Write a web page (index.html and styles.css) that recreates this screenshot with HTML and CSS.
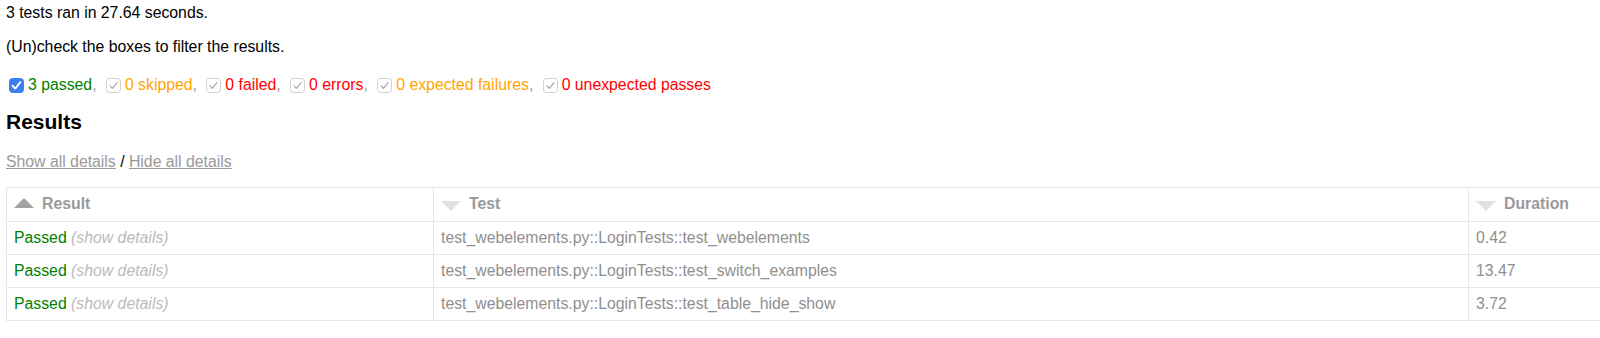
FILE: index.html
```html
<!DOCTYPE html>
<html>
<head>
<meta charset="utf-8">
<title>Test Report</title>
<link rel="stylesheet" href="styles.css">
</head>
<body>
<p class="summary-line">3 tests ran in 27.64 seconds.</p>
<p class="summary-line hint">(Un)check the boxes to filter the results.</p>
<div class="filters">
  <span class="cb checked first"><svg viewBox="0 0 15 15" width="15" height="15"><path d="M3.6 7.8 L6.3 10.6 L11.4 4.2" fill="none" stroke="#fff" stroke-width="1.9" stroke-linecap="round" stroke-linejoin="round"/></svg></span><span class="passed">3 passed</span><span class="sep">, </span>
  <span class="cb"><svg viewBox="0 0 15 15" width="15" height="15"><path d="M4 7.8 L6.4 10.3 L11 4.6" fill="none" stroke="#a8a8a8" stroke-width="1.2" stroke-linecap="round" stroke-linejoin="round"/></svg></span><span class="skipped">0 skipped</span><span class="sep">, </span>
  <span class="cb"><svg viewBox="0 0 15 15" width="15" height="15"><path d="M4 7.8 L6.4 10.3 L11 4.6" fill="none" stroke="#a8a8a8" stroke-width="1.2" stroke-linecap="round" stroke-linejoin="round"/></svg></span><span class="failed">0 failed</span><span class="sep">, </span>
  <span class="cb"><svg viewBox="0 0 15 15" width="15" height="15"><path d="M4 7.8 L6.4 10.3 L11 4.6" fill="none" stroke="#a8a8a8" stroke-width="1.2" stroke-linecap="round" stroke-linejoin="round"/></svg></span><span class="failed">0 errors</span><span class="sep">, </span>
  <span class="cb"><svg viewBox="0 0 15 15" width="15" height="15"><path d="M4 7.8 L6.4 10.3 L11 4.6" fill="none" stroke="#a8a8a8" stroke-width="1.2" stroke-linecap="round" stroke-linejoin="round"/></svg></span><span class="skipped">0 expected failures</span><span class="sep">, </span>
  <span class="cb"><svg viewBox="0 0 15 15" width="15" height="15"><path d="M4 7.8 L6.4 10.3 L11 4.6" fill="none" stroke="#a8a8a8" stroke-width="1.2" stroke-linecap="round" stroke-linejoin="round"/></svg></span><span class="failed">0 unexpected passes</span>
</div>
<h2 class="results-title">Results</h2>
<p class="details-links"><a href="#">Show all details</a> / <a href="#">Hide all details</a></p>
<table class="results-table">
  <colgroup>
    <col class="c-result">
    <col class="c-test">
    <col class="c-duration">
  </colgroup>
  <thead>
    <tr>
      <th><span class="sort-icon asc"></span>Result</th>
      <th><span class="sort-icon inactive"></span>Test</th>
      <th><span class="sort-icon inactive"></span>Duration</th>
    </tr>
  </thead>
  <tbody>
    <tr>
      <td><span class="passed">Passed</span> <span class="expander">(show details)</span></td>
      <td>test_webelements.py::LoginTests::test_webelements</td>
      <td>0.42</td>
    </tr>
    <tr>
      <td><span class="passed">Passed</span> <span class="expander">(show details)</span></td>
      <td>test_webelements.py::LoginTests::test_switch_examples</td>
      <td>13.47</td>
    </tr>
    <tr>
      <td><span class="passed">Passed</span> <span class="expander">(show details)</span></td>
      <td>test_webelements.py::LoginTests::test_table_hide_show</td>
      <td>3.72</td>
    </tr>
  </tbody>
</table>
</body>
</html>
```
FILE: styles.css
```css
html {
  overflow: hidden;
  background: #fff;
}
body {
  margin: 0;
  padding: 0 0 0 6px;
  font-family: "Liberation Sans", Arial, Helvetica, sans-serif;
  font-size: 15.8px;
  line-height: 18px;
  color: #999;
}
.summary-line {
  margin: 4px 0 0 0;
  color: #000;
}
.hint {
  margin-top: 16px;
}
.filters {
  margin-top: 20px;
  height: 18px;
  display: flex;
  align-items: center;
  white-space: pre;
}
.cb {
  display: inline-block;
  width: 15px;
  height: 15px;
  box-sizing: border-box;
  border: 1px solid #cfcfcf;
  border-radius: 3.5px;
  background: #fff;
  margin: 0 4px 0 5px;
}
.cb.first {
  margin-left: 3px;
}
.cb svg {
  display: block;
  margin: -1px;
}
.cb.checked {
  background: #3b7ff5;
  border-color: #3b7ff5;
}
.sep {
  color: #999;
}
.passed {
  color: #008000;
}
.skipped {
  color: #ffa500;
}
.failed {
  color: #ff0000;
}
.results-title {
  margin: 16px 0 0 0;
  font-size: 21px;
  line-height: 24px;
  font-weight: bold;
  color: #000;
}
.details-links {
  margin: 19px 0 0 0;
  color: #000;
}
.details-links a {
  color: #999;
  text-decoration: underline;
}
.results-table {
  margin-top: 16px;
  border-collapse: collapse;
  table-layout: fixed;
  width: 1800px;
  border: 1px solid #e6e6e6;
  color: #8f8f8f;
}
.c-result {
  width: 427px;
}
.c-test {
  width: 1035px;
}
.c-duration {
  width: 338px;
}
.results-table th,
.results-table td {
  border: 1px solid #e6e6e6;
  padding: 7px 7px;
  text-align: left;
  white-space: nowrap;
}
.results-table th {
  padding-bottom: 8px;
  font-weight: bold;
  color: #999;
}
.sort-icon {
  float: left;
  width: 0;
  height: 0;
  margin: 4px 8px 0 0;
  border-left: 10px solid transparent;
  border-right: 10px solid transparent;
}
.sort-icon.asc {
  margin-top: 3px;
  border-bottom: 10px solid #a3a3a3;
}
.sort-icon.inactive {
  margin-top: 6px;
  border-top: 10px solid #e2e2e2;
}
.expander {
  color: #bbb;
  font-style: italic;
}
```
